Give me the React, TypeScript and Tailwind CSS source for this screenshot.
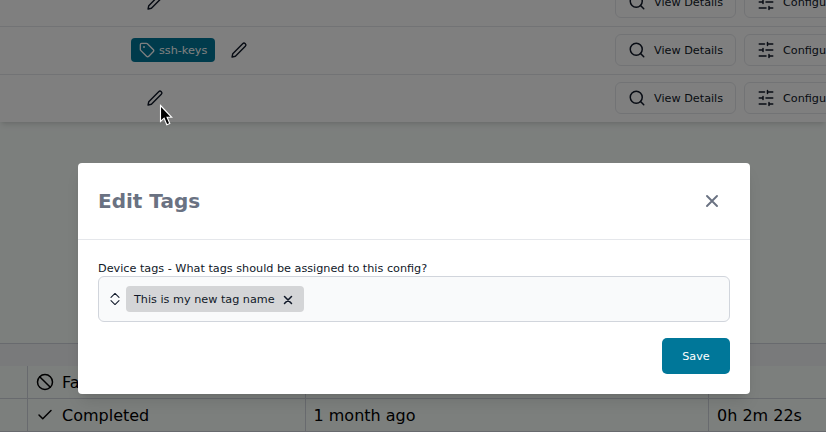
import type { ReactNode } from "react";

function Icon({ size, stroke = 2, className = "", children }: { size: number; stroke?: number; className?: string; children: ReactNode }) {
  return (
    <svg width={size} height={size} viewBox="0 0 24 24" fill="none" stroke="currentColor" strokeWidth={stroke} strokeLinecap="round" strokeLinejoin="round" className={`shrink-0 ${className}`}>
      {children}
    </svg>
  );
}

const Pencil = () => (
  <Icon size={18} stroke={1.9} className="-mx-px">
    <path d="M16.9 3.6a2.45 2.45 0 1 1 3.5 3.5L7.2 20.3 2.8 21.3l.9-4.4z" />
  </Icon>
);

const Close = ({ size, stroke = 2 }: { size: number; stroke?: number }) => (
  <Icon size={size} stroke={stroke}>
    <path d="M18 6 6 18M6 6l12 12" />
  </Icon>
);

function DeviceRow({ tag }: { tag?: string }) {
  return (
    <div className="flex h-12 shrink-0 border-t border-gray-200 pt-[7px] text-[11.23px] text-gray-900">
      <div className="flex h-8 w-[615px] shrink-0 items-center pl-[131px]">
        {tag && (
          <span className="mr-4 flex h-6 w-[84px] items-center gap-1 rounded bg-[#007799] pl-2 text-white">
            <Icon size={16}>
              <path d="M12.586 2.586A2 2 0 0 0 11.172 2H4a2 2 0 0 0-2 2v7.172a2 2 0 0 0 .586 1.414l8.704 8.704a2.426 2.426 0 0 0 3.42 0l6.58-6.58a2.426 2.426 0 0 0 0-3.42z" />
              <circle cx="7.5" cy="7.5" r=".5" fill="currentColor" />
            </Icon>
            <span className="pt-0.5">{tag}</span>
          </span>
        )}
        <span className={tag ? "" : "ml-4"}>
          <Pencil />
        </span>
      </div>
      <div className="flex h-8 shrink-0 gap-2">
        <div className="flex w-[121px] items-center gap-2 rounded-md border border-gray-200 pl-3">
          <Icon size={18}>
            <circle cx="11" cy="11" r="8" />
            <path d="m21 21-4.3-4.3" />
          </Icon>
          <span className="pt-0.5">View Details</span>
        </div>
        <div className="flex w-[121px] items-center gap-2 rounded-md border border-gray-200 pl-3">
          <Icon size={18}>
            <path d="M21 4h-7M10 4H3M21 12h-9M8 12H3M21 20h-5M12 20H3M14 2v4M8 10v4M16 18v4" />
          </Icon>
          <span className="pt-0.5">Configure</span>
        </div>
      </div>
    </div>
  );
}

function JobRow({ status, icon, age, duration }: { status: string; icon: ReactNode; age: string; duration: string }) {
  return (
    <div className="flex h-[33px] shrink-0 border-b border-gray-300 text-base text-black">
      <div className="w-7 shrink-0 border-r border-gray-300" />
      <div className="flex w-[278px] shrink-0 items-center gap-2 border-r border-gray-300 pl-2">
        {icon}
        <span className="pt-0.5">{status}</span>
      </div>
      <div className="flex w-[403px] shrink-0 items-center border-r border-gray-300 pl-[7.5px] pt-0.5">{age}</div>
      <div className="flex shrink-0 items-center pl-2 pt-0.5">{duration}</div>
    </div>
  );
}

export default function App() {
  return (
    <div className="relative h-[432px] w-[826px] overflow-hidden bg-[#f9fefb] font-['DejaVu_Sans',sans-serif]">
      <div className="flex h-full flex-col">
        <div className="-mt-[22px] shrink-0 bg-white shadow-md">
          <DeviceRow />
          <DeviceRow tag="ssh-keys" />
          <DeviceRow />
        </div>
        <div className="mt-[221px] h-[23px] shrink-0 border-t border-gray-300 bg-gray-100" />
        <JobRow
          status="Failed"
          age="1 month ago"
          duration=""
          icon={
            <Icon size={18}>
              <circle cx="12" cy="12" r="10" />
              <path d="m4.9 4.9 14.2 14.2" />
            </Icon>
          }
        />
        <JobRow
          status="Completed"
          age="1 month ago"
          duration="0h 2m 22s"
          icon={
            <Icon size={18}>
              <path d="M20 6 9 17l-5-5" />
            </Icon>
          }
        />
      </div>

      <div className="absolute inset-0 flex items-start bg-black/50 pl-[78px] pt-[163px]">
        <div className="flex h-[231px] w-[672px] flex-col rounded bg-white shadow-lg">
          <div className="flex h-[77px] shrink-0 items-center justify-between border-b border-gray-200 pl-5 pr-7 text-gray-500">
            <h2 className="text-xl font-bold">Edit Tags</h2>
            <Close size={20} stroke={2.3} />
          </div>
          <div className="flex flex-col px-5 pt-5 text-[11.23px] text-gray-900">
            <label className="h-4 pt-px leading-4">Device tags - What tags should be assigned to this config?</label>
            <div className="flex h-[46px] items-center rounded-md border border-gray-300 bg-gray-50 pl-2">
              <Icon size={16} stroke={1.6}>
                <path d="m6 9.5 6-5.8 6 5.8M6 14.5l6 5.8 6-5.8" />
              </Icon>
              <div className="ml-[3px] flex h-[26px] w-[178px] items-center gap-[6px] rounded bg-[#d4d5d7] pl-2">
                <span className="pt-0.5">This is my new tag name</span>
                <span className="pt-px">
                  <Close size={14} stroke={2.6} />
                </span>
              </div>
            </div>
            <button className="mt-4 h-9 w-[68px] self-end rounded-[5px] bg-[#007799] pt-0.5 text-white">Save</button>
          </div>
        </div>
      </div>

      <svg className="absolute left-[159px] top-[104px]" width="16" height="24" viewBox="0 0 16 24">
        <path d="M1.5 1.5v16l3.6-3.3 2.7 6.6 3-1.3-2.7-6.2h4.6z" fill="#000" stroke="#fff" strokeWidth="1.1" />
      </svg>
    </div>
  );
}
